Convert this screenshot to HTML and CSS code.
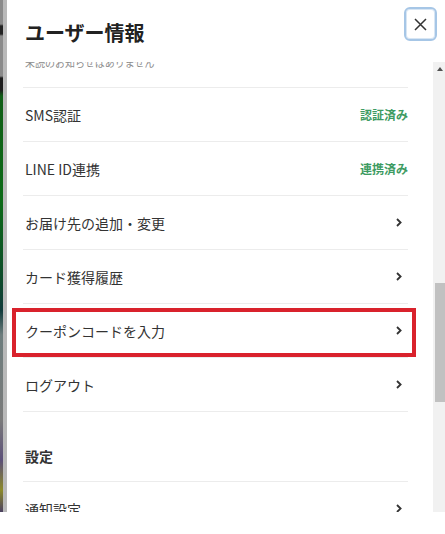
FILE: index.html
```html
<!DOCTYPE html>
<html lang="ja">
<head>
<meta charset="utf-8">
<title>ユーザー情報</title>
<link rel="stylesheet" href="styles.css">
</head>
<body>
<div class="screen">
  <div class="backdrop"></div>
  <div class="modal">
    <header class="modal-head">
      <h1 class="modal-title">ユーザー情報</h1>
      <button class="close" type="button" aria-label="閉じる">
        <svg width="13" height="13" viewBox="0 0 13 13"><path d="M1 1 L12 12 M12 1 L1 12" stroke="#333" stroke-width="1.5" fill="none"/></svg>
      </button>
    </header>
    <div class="modal-body">
      <div class="scroll">
        <p class="notice">未読のお知らせはありません</p>
        <ul class="menu">
          <li class="row"><span class="label">SMS認証</span><span class="status">認証済み</span></li>
          <li class="row"><span class="label">LINE ID連携</span><span class="status">連携済み</span></li>
          <li class="row"><span class="label">お届け先の追加・変更</span><svg class="chev" width="6" height="9" viewBox="0 0 6 9"><path d="M1 1 L4.6 4.5 L1 8" stroke="#333" stroke-width="1.8" fill="none"/></svg></li>
          <li class="row"><span class="label">カード獲得履歴</span><svg class="chev" width="6" height="9" viewBox="0 0 6 9"><path d="M1 1 L4.6 4.5 L1 8" stroke="#333" stroke-width="1.8" fill="none"/></svg></li>
          <li class="row row-marked"><span class="label">クーポンコードを入力</span><svg class="chev" width="6" height="9" viewBox="0 0 6 9"><path d="M1 1 L4.6 4.5 L1 8" stroke="#333" stroke-width="1.8" fill="none"/></svg><span class="highlight"></span></li>
          <li class="row"><span class="label">ログアウト</span><svg class="chev" width="6" height="9" viewBox="0 0 6 9"><path d="M1 1 L4.6 4.5 L1 8" stroke="#333" stroke-width="1.8" fill="none"/></svg></li>
          <li class="section">設定</li>
          <li class="row"><span class="label">通知設定</span><svg class="chev" width="6" height="9" viewBox="0 0 6 9"><path d="M1 1 L4.6 4.5 L1 8" stroke="#333" stroke-width="1.8" fill="none"/></svg></li>
        </ul>
      </div>
      <div class="scrollbar">
        <div class="sb-up"></div>
        <div class="sb-thumb"></div>
      </div>
    </div>
  </div>
</div>
</body>
</html>
```

FILE: styles.css
```css
* { box-sizing: border-box; }
html, body {
  margin: 0;
  padding: 0;
  background: #fff;
}
body {
  font-family: "Noto Sans CJK JP", "Noto Sans", sans-serif;
  color: #333;
}
.screen {
  display: flex;
  height: 512px;
  width: 445px;
  overflow: hidden;
}
.backdrop {
  width: 7px;
  flex: none;
  border-right: 4px solid #b9b9b9;
  background: linear-gradient(to bottom,
    #8a8a8a 0px, #8a8a8a 24px, #222 26px, #222 34px, #8a8a8a 36px,
    #8a8a8a 76px, #1c1c1c 78px, #1c1c1c 90px, #0f5d16 96px,
    #0c6a17 200px, #0d4a2a 280px, #0f3a3a 310px, #6d7d7d 335px,
    #7a7a7a 420px, #5b4f78 460px, #8c8a2a 490px, #4a4060 512px);
}
.modal {
  flex: 1;
  display: flex;
  flex-direction: column;
  background: #fff;
  min-width: 0;
}
.modal-head {
  height: 62px;
  flex: none;
  display: flex;
  justify-content: space-between;
  align-items: flex-start;
  padding: 0 8px 0 18px;
}
.modal-title {
  margin: 23px 0 0;
  font-size: 20px;
  line-height: 20px;
  font-weight: 700;
  color: #222;
}
.close {
  margin-top: 7px;
  width: 33px;
  height: 34px;
  padding: 0;
  border: 2px solid #a6c6e6;
  border-radius: 6px;
  background: #fff;
  display: flex;
  align-items: center;
  justify-content: center;
  box-shadow: inset 0 0 0 1px #d8e6f4;
}
.modal-body {
  flex: 1;
  display: flex;
  min-height: 0;
}
.scroll {
  flex: 1;
  overflow: hidden;
  padding: 0 25px 0 16px;
}
.notice {
  margin: -6px 0 0;
  padding: 0 0 17px 2px;
  font-size: 10px;
  line-height: 14px;
  color: #8c8c8c;
  border-bottom: 1px solid #ececec;
}
.menu {
  list-style: none;
  margin: 0;
  padding: 0;
}
.row {
  position: relative;
  height: 54px;
  display: flex;
  align-items: center;
  justify-content: space-between;
  padding: 0 0 0 2px;
  border-bottom: 1px solid #ececec;
  font-size: 14px;
  line-height: 20px;
}
.label { color: #333; }
.status {
  font-size: 12px;
  font-weight: 700;
  color: #3d9b62;
}
.chev {
  margin-right: 6px;
  flex: none;
}
.highlight {
  position: absolute;
  top: 4px;
  bottom: 0;
  left: -11px;
  right: -8px;
  border: 4px solid #d9222c;
  pointer-events: none;
}
.section {
  height: 70px;
  padding: 34px 0 0 2px;
  font-size: 14px;
  line-height: 20px;
  font-weight: 700;
  color: #333;
  border-bottom: 1px solid #ececec;
}
.scrollbar {
  width: 12px;
  flex: none;
  background: #f1f1f1;
  position: relative;
  display: flex;
  flex-direction: column;
}
.sb-up {
  height: 221px;
  flex: none;
  position: relative;
}
.sb-up::before {
  content: "";
  position: absolute;
  top: 5px;
  left: 4px;
  border-left: 3px solid transparent;
  border-right: 3px solid transparent;
  border-bottom: 4px solid #505050;
}
.sb-thumb {
  height: 119px;
  margin-left: 2px;
  background: #c1c1c1;
}
```
